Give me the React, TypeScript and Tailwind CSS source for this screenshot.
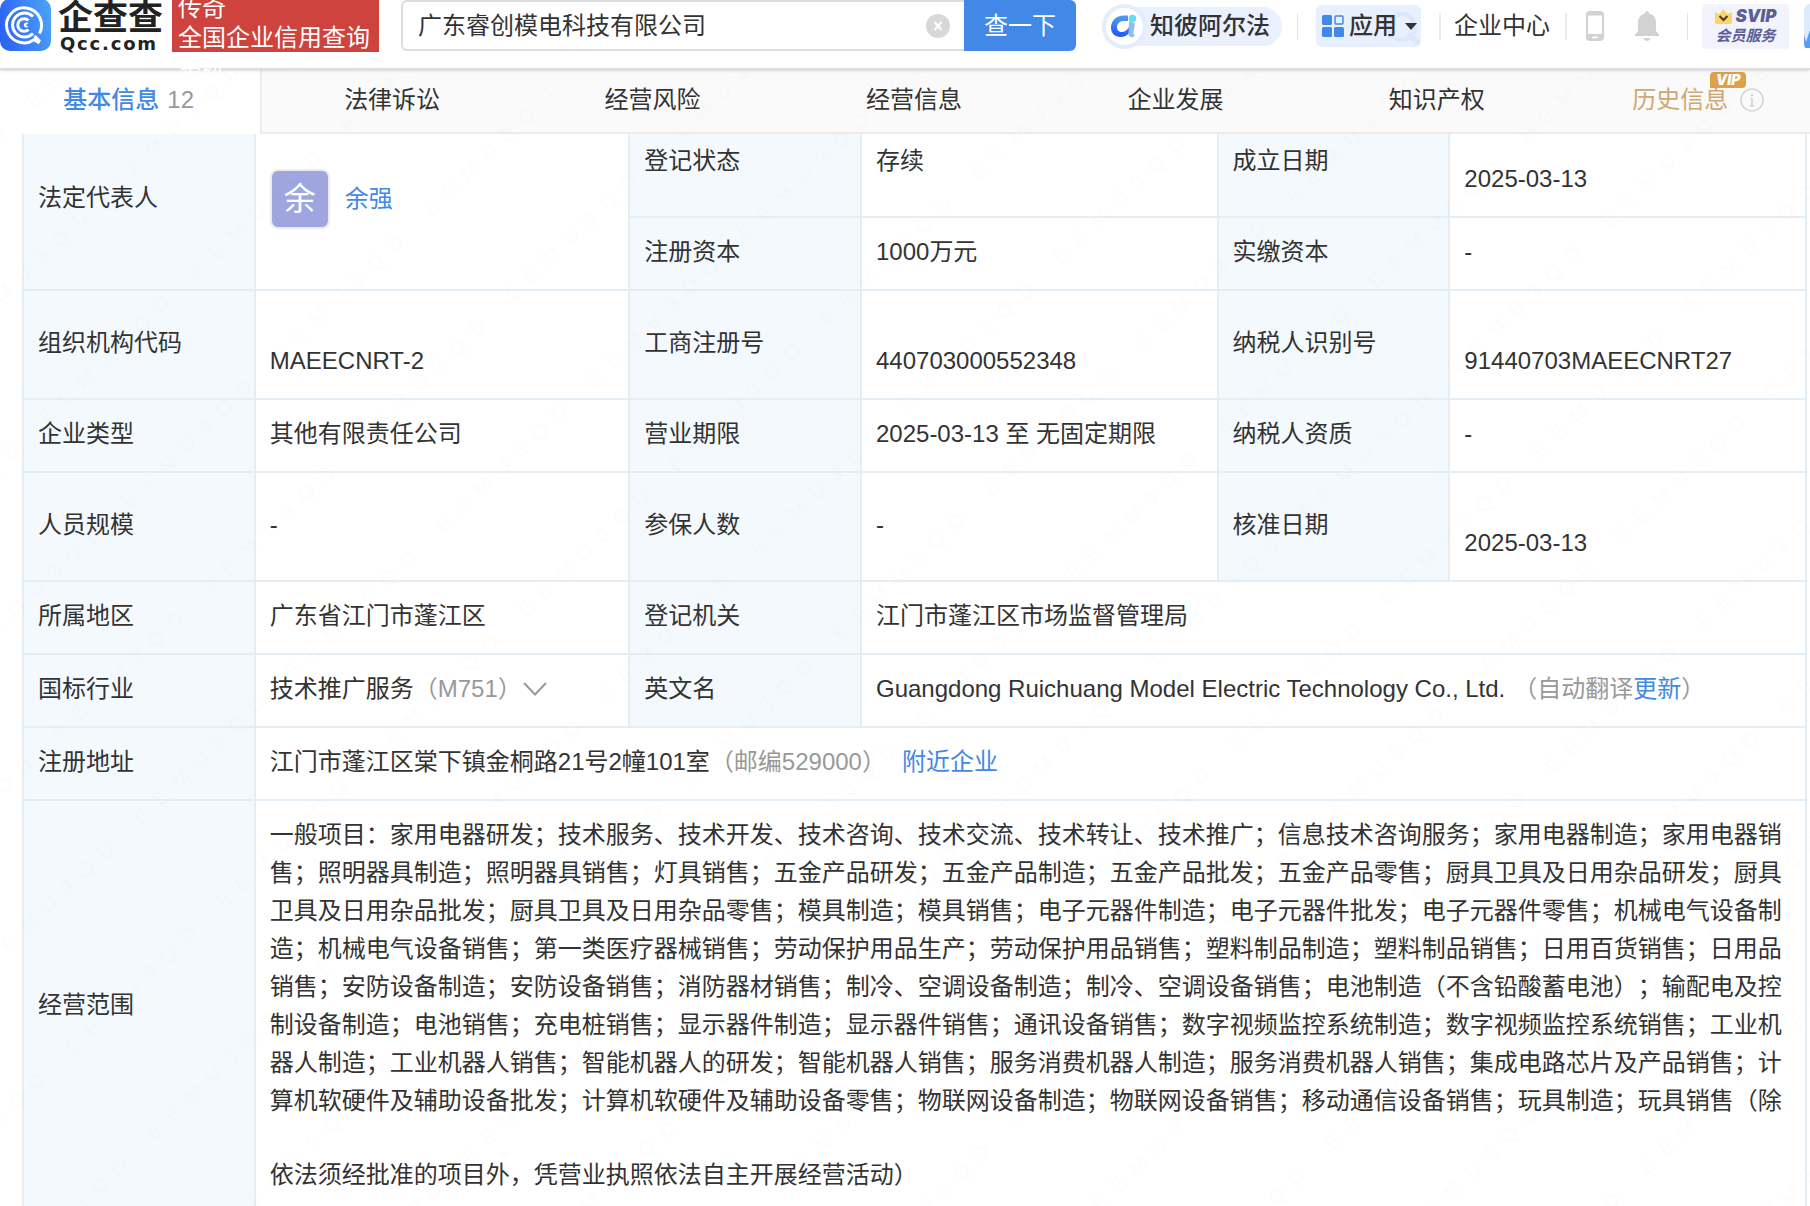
import { useState } from "react";
import type { ReactNode } from "react";
import clsx from "clsx";

const tabs = ["法律诉讼", "经营风险", "经营信息", "企业发展", "知识产权"];

const scope =
  "一般项目：家用电器研发；技术服务、技术开发、技术咨询、技术交流、技术转让、技术推广；信息技术咨询服务；家用电器制造；家用电器销售；照明器具制造；照明器具销售；灯具销售；五金产品研发；五金产品制造；五金产品批发；五金产品零售；厨具卫具及日用杂品研发；厨具卫具及日用杂品批发；厨具卫具及日用杂品零售；模具制造；模具销售；电子元器件制造；电子元器件批发；电子元器件零售；机械电气设备制造；机械电气设备销售；第一类医疗器械销售；劳动保护用品生产；劳动保护用品销售；塑料制品制造；塑料制品销售；日用百货销售；日用品销售；安防设备制造；安防设备销售；消防器材销售；制冷、空调设备制造；制冷、空调设备销售；电池制造（不含铅酸蓄电池）；输配电及控制设备制造；电池销售；充电桩销售；显示器件制造；显示器件销售；通讯设备销售；数字视频监控系统制造；数字视频监控系统销售；工业机器人制造；工业机器人销售；智能机器人的研发；智能机器人销售；服务消费机器人制造；服务消费机器人销售；集成电路芯片及产品销售；计算机软硬件及辅助设备批发；计算机软硬件及辅助设备零售；物联网设备制造；物联网设备销售；移动通信设备销售；玩具制造；玩具销售（除";

function Label({ children, className = "pb-1" }: { children: ReactNode; className?: string }) {
  return (
    <th
      scope="row"
      className={clsx(
        "border-2 border-[#e4eef6] bg-[#f3f9fd] px-3.5 text-left font-normal",
        className,
      )}
    >
      {children}
    </th>
  );
}

function Value({
  children,
  className = "pb-1",
  colSpan,
  rowSpan,
}: {
  children: ReactNode;
  className?: string;
  colSpan?: number;
  rowSpan?: number;
}) {
  return (
    <td
      colSpan={colSpan}
      rowSpan={rowSpan}
      className={clsx("border-2 border-[#e4eef6] px-3.5", className)}
    >
      {children}
    </td>
  );
}

function Logo() {
  return (
    <svg width="51" height="51" viewBox="0 0 51 51" fill="none" aria-hidden="true">
      <defs>
        <linearGradient id="logo" x1="0" y1="0.6" x2="1" y2="0.4">
          <stop stopColor="#2b62f5" />
          <stop offset="1" stopColor="#4aa0f8" />
        </linearGradient>
      </defs>
      <rect y="-1" width="51" height="52" rx="10" fill="url(#logo)" />
      <g stroke="#fff" strokeWidth="3">
        <path d="M39.500 33.500A17.500 17.500 0 1 0 34 39.700L39.500 43M34.500 36L40 41.500" />
        <path d="M33 16.500A12 12 0 1 0 33 33.500" />
        <path d="M28.500 20.500A6.300 6.300 0 1 0 28.500 29.500" />
        <path d="M27.500 24.200A1.500 1.500 0 1 0 27.500 26" strokeWidth="2" />
      </g>
    </svg>
  );
}

function AlphaIcon() {
  return (
    <svg width="45" height="45" viewBox="0 0 45 45" fill="none" aria-hidden="true">
      <defs>
        <linearGradient id="alpha" x1="0" y1="0" x2="0" y2="1">
          <stop stopColor="#4f9df7" />
          <stop offset="1" stopColor="#2456f6" />
        </linearGradient>
      </defs>
      <circle cx="22.500" cy="22.500" r="20.500" fill="#fff" stroke="#e2edfe" strokeWidth="4" />
      <path
        d="M26 11.500H22C14 11.500 9 17 9 23.500C9 29.500 13 33 18.500 33C22 33 25 31.500 27 29V23C25 26.500 22.500 28 20 28C17 28 15 26 15 23C15 19.500 18 17 21.500 17H26Z"
        fill="url(#alpha)"
      />
      <path d="M27 17.500L33 19L31.500 28C31.500 30 32 31 33 31.500C29.500 35 26.500 33 26.500 29.500Z" fill="#8fbdf9" />
      <circle cx="30.500" cy="14.500" r="3.700" fill="#5fdcf6" />
    </svg>
  );
}

function AppsIcon() {
  return (
    <svg width="22" height="22" viewBox="0 0 22 22" aria-hidden="true">
      <g fill="#4288e6">
        <rect width="10" height="10" rx="1.500" />
        <rect y="12" width="10" height="10" rx="1.500" />
        <rect x="12" y="12" width="10" height="10" rx="1.500" />
      </g>
      <rect x="13" y="1" width="8" height="8" rx="1" fill="none" stroke="#4288e6" strokeWidth="1.500" />
    </svg>
  );
}

function Watermark() {
  return (
    <svg className="pointer-events-none absolute inset-0 h-full w-full" aria-hidden="true">
      <defs>
        <pattern
          id="mark"
          width="210"
          height="118"
          patternUnits="userSpaceOnUse"
          patternTransform="translate(180 263) rotate(-44)"
        >
          <text
            x="2"
            y="24"
            fontFamily="Liberation Sans, sans-serif"
            fontSize="21"
            fill="#000"
            fillOpacity="0.013"
            xmlSpace="preserve"
          >
            {"E\u00a0\u00a0E\u00a0\u00a0M\u00a0\u00a0U\u00a0\u00a03\u00a0\u00a0Q\u00a0\u00a0D"}
          </text>
        </pattern>
      </defs>
      <rect width="100%" height="100%" fill="url(#mark)" />
    </svg>
  );
}

function Header() {
  const [keyword, setKeyword] = useState("广东睿创模电科技有限公司");
  return (
    <header className="relative z-10 flex h-[70px] items-start border-b-2 border-[#dddddd] bg-white shadow-sm">
      <a href="#" className="flex shrink-0" aria-label="企查查">
        <Logo />
        <span className="ml-[7px] flex w-[114px] flex-col text-[#222]">
          <span className="text-[35px] leading-9 font-bold">企查查</span>
          <span className="pl-0.5 font-['DejaVu_Sans',sans-serif] text-lg leading-4 font-bold tracking-widest">
            Qcc.com
          </span>
        </span>
      </a>
      <div className="h-[52px] w-[207px] shrink-0 bg-[#ce433d] pl-1.5 leading-[30px] text-white">
        <p className="-mt-[7px]">
          传奇
          <br />
          全国企业信用查询
          <br />
          系统
        </p>
      </div>
      <form className="ml-[22px] flex h-[51px] flex-1" onSubmit={(e) => e.preventDefault()}>
        <div className="flex flex-1 items-center rounded-l-md border-2 border-r-0 border-[#dddddd] pr-3.5 pl-[15px]">
          <input
            aria-label="企业名称"
            className="min-w-0 flex-1 outline-none"
            value={keyword}
            onChange={(e) => setKeyword(e.target.value)}
          />
          <button type="button" aria-label="清除" onClick={() => setKeyword("")}>
            <svg width="24" height="24" viewBox="0 0 24 24" aria-hidden="true">
              <circle cx="12" cy="12" r="12" fill="#d8d8d8" />
              <path d="M8.500 8L15.500 16M15.500 8L8.500 16" stroke="#fff" strokeWidth="2" />
            </svg>
          </button>
        </div>
        <button type="submit" className="w-28 rounded-r-md bg-[#4288e6] text-white">
          查一下
        </button>
      </form>
      <nav className="ml-[26px] flex h-[52px] shrink-0 items-center whitespace-nowrap">
        <a href="#" className="flex h-[39px] w-[180px] items-center gap-[3px] rounded-full bg-[#e9f0fe] font-medium">
          <AlphaIcon />
          知彼阿尔法
        </a>
        <span className="ml-[15px] h-[27px] w-px bg-[#e5e5e5]" />
        <button
          type="button"
          className="relative ml-[18px] flex h-[42px] w-[105px] items-center rounded-md bg-[#e8f0fe] pl-1.5 font-medium"
        >
          <svg className="absolute right-0 bottom-0" width="36" height="38" viewBox="0 0 36 38" fill="none" stroke="#dbe8fc" aria-hidden="true">
            <circle cx="17" cy="18" r="13" strokeWidth="4" />
            <path d="M25 27L32 33" strokeWidth="6" strokeLinecap="round" />
          </svg>
          <AppsIcon />
          <span className="relative ml-[5px]">应用</span>
          <svg className="relative ml-2" width="12" height="7" viewBox="0 0 12 7" aria-hidden="true">
            <path d="M0 0H12L6 7Z" fill="#333" />
          </svg>
        </button>
        <span className="ml-[18px] h-[27px] w-0.5 bg-[#ececec]" />
        <a href="#" className="ml-[13px]">
          企业中心
        </a>
        <span className="ml-[15px] h-[27px] w-0.5 bg-[#ececec]" />
        <button type="button" aria-label="手机版" className="ml-[19px]">
          <svg width="18" height="30" viewBox="0 0 18 30" aria-hidden="true">
            <rect width="18" height="30" rx="4" fill="#d2d2d2" />
            <rect x="2" y="4.500" width="14" height="18.500" fill="#fff" />
            <rect x="6" y="25.500" width="6" height="1.800" rx="0.900" fill="#fff" />
          </svg>
        </button>
        <button type="button" aria-label="消息" className="ml-[31px]">
          <svg width="24" height="30" viewBox="0 0 24 30" fill="#d2d2d2" aria-hidden="true">
            <path d="M12 0C13.300 0 14 1 14 2.500C18.500 3.500 21 7 21 11.500V20L24 23.500V25H0V23.500L3 20V11.500C3 7 5.500 3.500 10 2.500C10 1 10.700 0 12 0Z" />
            <path d="M8.500 27H15.500C15 29 13.500 30 12 30C10.500 30 9 29 8.500 27Z" />
          </svg>
        </button>
        <span className="ml-7 h-[27px] w-px bg-[#e5e5e5]" />
        <a
          href="#"
          className="ml-3.5 flex h-[45px] w-[87px] flex-col items-center justify-center rounded-sm bg-[#f3f3fe] font-bold text-[#5c5f96]"
        >
          <span className="flex items-center gap-1">
            <svg width="17" height="15" viewBox="0 0 17 15" aria-hidden="true">
              <path d="M0 3L4.500 5L8.500 0L12.500 5L17 3V13Q17 15 15 15H2Q0 15 0 13Z" fill="#fbd667" />
              <path d="M4.500 7L8.500 11L12.500 7" fill="none" stroke="#4b3a2a" strokeWidth="2" />
            </svg>
            <span className="font-['Inter',sans-serif] text-[17px] leading-5 font-black italic">SVIP</span>
          </span>
          <span className="text-[15px] leading-5 italic">会员服务</span>
        </a>
        <span className="ml-[15px] flex w-1.5 overflow-hidden">
          <svg width="44" height="44" viewBox="0 0 44 44" className="shrink-0" aria-hidden="true">
            <rect width="44" height="44" rx="6" fill="#dcecfe" />
            <path d="M0 30L2 38L10 14L12 44H2Q0 44 0 38Z" fill="#5a9bf5" />
          </svg>
        </span>
      </nav>
    </header>
  );
}

function Tabs() {
  return (
    <nav className="overflow-hidden">
      <div className="-ml-px grid h-16 w-[calc(100%+20px)] grid-cols-7">
        <a href="#" className="flex items-center justify-center gap-2 pr-0.5 pb-1">
          <span className="font-medium text-[#4288e6]">基本信息</span>
          <span className="text-[#999]">12</span>
        </a>
        {tabs.map((tab) => (
          <a
            key={tab}
            href="#"
            className="flex items-center justify-center border-b-2 border-[#ececec] bg-[#fafafa] pb-0.5 nth-2:border-l-2"
          >
            {tab}
          </a>
        ))}
        <a
          href="#"
          className="flex items-center justify-center gap-3 border-b-2 border-[#ececec] bg-[#fafafa] pb-0.5"
        >
          <span className="relative text-[#cfa873]">
            历史信息
            <span className="absolute -top-2.5 left-[78px] flex h-4 w-9 items-center justify-center rounded-sm rounded-bl-none bg-[#dea04a] font-['Inter',sans-serif] text-sm leading-4 font-black text-white italic">
              VIP
            </span>
          </span>
          <svg width="24" height="24" viewBox="0 0 24 24" fill="none" aria-hidden="true">
            <circle cx="12" cy="12" r="11" stroke="#d4d4d4" strokeWidth="1.500" />
            <path d="M12 10.500V18M10.500 10.500H12M10.300 18H13.700" stroke="#cfcfcf" strokeWidth="1.500" />
            <circle cx="12" cy="7" r="1.200" fill="#cfcfcf" />
          </svg>
        </a>
      </div>
    </nav>
  );
}

export default function App() {
  return (
    <div className="relative h-screen overflow-hidden bg-white font-['Liberation_Sans','Noto_Sans_CJK_SC',sans-serif] text-2xl leading-9 text-[#333]">
      <Header />
      <Tabs />
      <main className="pr-[3px] pl-[22px]">
        <table className="w-full table-fixed border-collapse">
          <colgroup>
            <col className="w-[13%]" />
            <col className="w-[21%]" />
            <col className="w-[13%]" />
            <col className="w-[20%]" />
            <col className="w-[13%]" />
            <col className="w-[20%]" />
          </colgroup>
          <tbody>
            <tr className="h-[83px] align-top">
              <th
                scope="row"
                rowSpan={2}
                className="border-2 border-t-0 border-[#e4eef6] bg-[#f3f9fd] px-3.5 pt-[46px] text-left font-normal"
              >
                法定代表人
              </th>
              <Value rowSpan={2} className="border-t-0 pt-[35px]">
                <div className="flex items-center gap-[15px]">
                  <span className="flex size-[60px] items-center justify-center rounded-lg border-2 border-[#ececec] bg-[#9fa5df] text-[32px] text-white">
                    余
                  </span>
                  <a href="#" className="text-[#4288e6]">
                    余强
                  </a>
                </div>
              </Value>
              <Label className="border-t-0 pt-[9px]">登记状态</Label>
              <Value className="border-t-0 pt-[9px]">存续</Value>
              <Label className="border-t-0 pt-[9px]">成立日期</Label>
              <Value className="border-t-0 pt-[27px]">2025-03-13</Value>
            </tr>
            <tr className="h-[73px]">
              <Label>注册资本</Label>
              <Value>1000万元</Value>
              <Label>实缴资本</Label>
              <Value>-</Value>
            </tr>
            <tr className="h-[109px]">
              <Label>组织机构代码</Label>
              <Value className="pt-8">MAEECNRT-2</Value>
              <Label>工商注册号</Label>
              <Value className="pt-8">440703000552348</Value>
              <Label>纳税人识别号</Label>
              <Value className="pt-8">91440703MAEECNRT27</Value>
            </tr>
            <tr className="h-[73px]">
              <Label>企业类型</Label>
              <Value>其他有限责任公司</Value>
              <Label>营业期限</Label>
              <Value>2025-03-13 至 无固定期限</Value>
              <Label>纳税人资质</Label>
              <Value>-</Value>
            </tr>
            <tr className="h-[109px]">
              <Label>人员规模</Label>
              <Value>-</Value>
              <Label>参保人数</Label>
              <Value>-</Value>
              <Label>核准日期</Label>
              <Value className="pt-8">2025-03-13</Value>
            </tr>
            <tr className="h-[73px]">
              <Label>所属地区</Label>
              <Value>广东省江门市蓬江区</Value>
              <Label>登记机关</Label>
              <Value colSpan={3}>江门市蓬江区市场监督管理局</Value>
            </tr>
            <tr className="h-[73px]">
              <Label>国标行业</Label>
              <Value>
                <div className="flex items-center">
                  技术推广服务<span className="text-[#999]">（M751）</span>
                  <button type="button" aria-label="展开">
                    <svg width="26" height="14" viewBox="0 0 26 14" fill="none" aria-hidden="true">
                      <path d="M2 1L13 12.500L24 1" stroke="#999" strokeWidth="2" />
                    </svg>
                  </button>
                </div>
              </Value>
              <Label>英文名</Label>
              <Value colSpan={3}>
                Guangdong Ruichuang Model Electric Technology Co., Ltd.
                <span className="ml-2 text-[#999]">
                  （自动翻译
                  <a href="#" className="text-[#4288e6]">
                    更新
                  </a>
                  ）
                </span>
              </Value>
            </tr>
            <tr className="h-[73px]">
              <Label>注册地址</Label>
              <Value colSpan={5}>
                江门市蓬江区棠下镇金桐路21号2幢101室
                <span className="text-[#999]">（邮编529000）</span>
                <a href="#" className="ml-4 text-[#4288e6]">
                  附近企业
                </a>
              </Value>
            </tr>
            <tr>
              <Label className="">经营范围</Label>
              <Value colSpan={5} className="py-[15px] leading-[38px] [text-spacing-trim:space-all]">
                <p>{scope}</p>
                <p className="mt-9">依法须经批准的项目外，凭营业执照依法自主开展经营活动）</p>
              </Value>
            </tr>
          </tbody>
        </table>
      </main>
      <Watermark />
    </div>
  );
}
